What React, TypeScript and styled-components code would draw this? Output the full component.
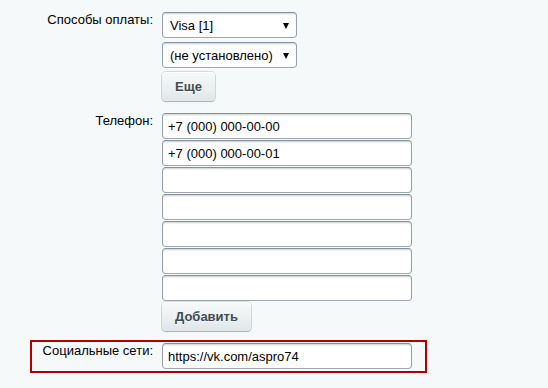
import React from 'react';
import styled, { createGlobalStyle } from 'styled-components';

const GlobalStyle = createGlobalStyle`
    html, body {
        margin: 0;
        padding: 0;
        background: #f5f9f9;
    }
    body {
        font-family: "Liberation Sans", Arial, sans-serif;
        font-size: 13px;
        color: #000;
    }
`;

const Form = styled.div`
    display: flex;
    flex-direction: column;
    gap: 5px;
    width: 397px;
    padding: 9px 0 0 30px;
`;

const Row = styled.div<{ $highlight?: boolean }>`
    display: grid;
    grid-template-columns: 130px 1fr;
    border: 2px solid ${(p) => (p.$highlight ? '#b20000' : 'transparent')};
    padding: 1px 0 2px;
`;

const Label = styled.div`
    text-align: right;
    padding-right: 9px;
    line-height: 15px;
    white-space: nowrap;
`;

const Field = styled.div<{ $gap: number }>`
    display: flex;
    flex-direction: column;
    align-items: flex-start;
    gap: ${(p) => p.$gap}px;
`;

const fieldBox = `
    box-sizing: border-box;
    height: 26px;
    background: #fff;
    border: 1px solid;
    border-color: #87919c #959ea9 #9ea7b1 #959ea9;
    border-radius: 4px;
    box-shadow: 0 1px 0 0 rgba(255, 255, 255, 0.3), inset 0 2px 2px -1px rgba(180, 188, 191, 0.7);
    font-family: "Liberation Sans", Arial, sans-serif;
    font-size: 13px;
    color: #000;
    outline: none;
`;

const TextInput = styled.input`
    ${fieldBox}
    width: 250px;
    padding: 0 5px;
`;

const SelectWrap = styled.div`
    position: relative;
    width: 135px;

    &::after {
        content: '';
        position: absolute;
        right: 8px;
        top: 11px;
        border-left: 3px solid transparent;
        border-right: 3px solid transparent;
        border-top: 6px solid #000;
        pointer-events: none;
    }
`;

const Select = styled.select`
    ${fieldBox}
    width: 100%;
    padding: 0 0 0 7px;
    appearance: none;
    -webkit-appearance: none;
`;

const Button = styled.button`
    box-sizing: border-box;
    height: 29px;
    padding: 0 13px;
    border: none;
    border-radius: 4px;
    background: linear-gradient(to bottom, #f8fafa, #e0e7e9);
    box-shadow: 0 0 0 1px rgba(150, 162, 170, 0.35), 0 1px 1px rgba(0, 0, 0, 0.25),
        inset 0 1px #fff;
    font-family: "Liberation Sans", Arial, sans-serif;
    font-size: 13px;
    font-weight: bold;
    color: #3f4b54;
    text-shadow: 0 1px rgba(255, 255, 255, 0.7);
`;

const phones = [
    '+7 (000) 000-00-00',
    '+7 (000) 000-00-01',
    '',
    '',
    '',
    '',
    '',
];

export default function App() {
    return (
        <>
            <GlobalStyle />
            <Form>
                <Row>
                    <Label>Способы оплаты:</Label>
                    <Field $gap={4}>
                        <SelectWrap>
                            <Select defaultValue="visa">
                                <option value="visa">Visa [1]</option>
                            </Select>
                        </SelectWrap>
                        <SelectWrap>
                            <Select defaultValue="">
                                <option value="">(не установлено)</option>
                            </Select>
                        </SelectWrap>
                        <Button>Еще</Button>
                    </Field>
                </Row>
                <Row>
                    <Label>Телефон:</Label>
                    <Field $gap={1}>
                        {phones.map((phone, index) => (
                            <TextInput key={index} defaultValue={phone} />
                        ))}
                        <Button>Добавить</Button>
                    </Field>
                </Row>
                <Row $highlight>
                    <Label>Социальные сети:</Label>
                    <Field $gap={0}>
                        <TextInput defaultValue="https://vk.com/aspro74" />
                    </Field>
                </Row>
            </Form>
        </>
    );
}
